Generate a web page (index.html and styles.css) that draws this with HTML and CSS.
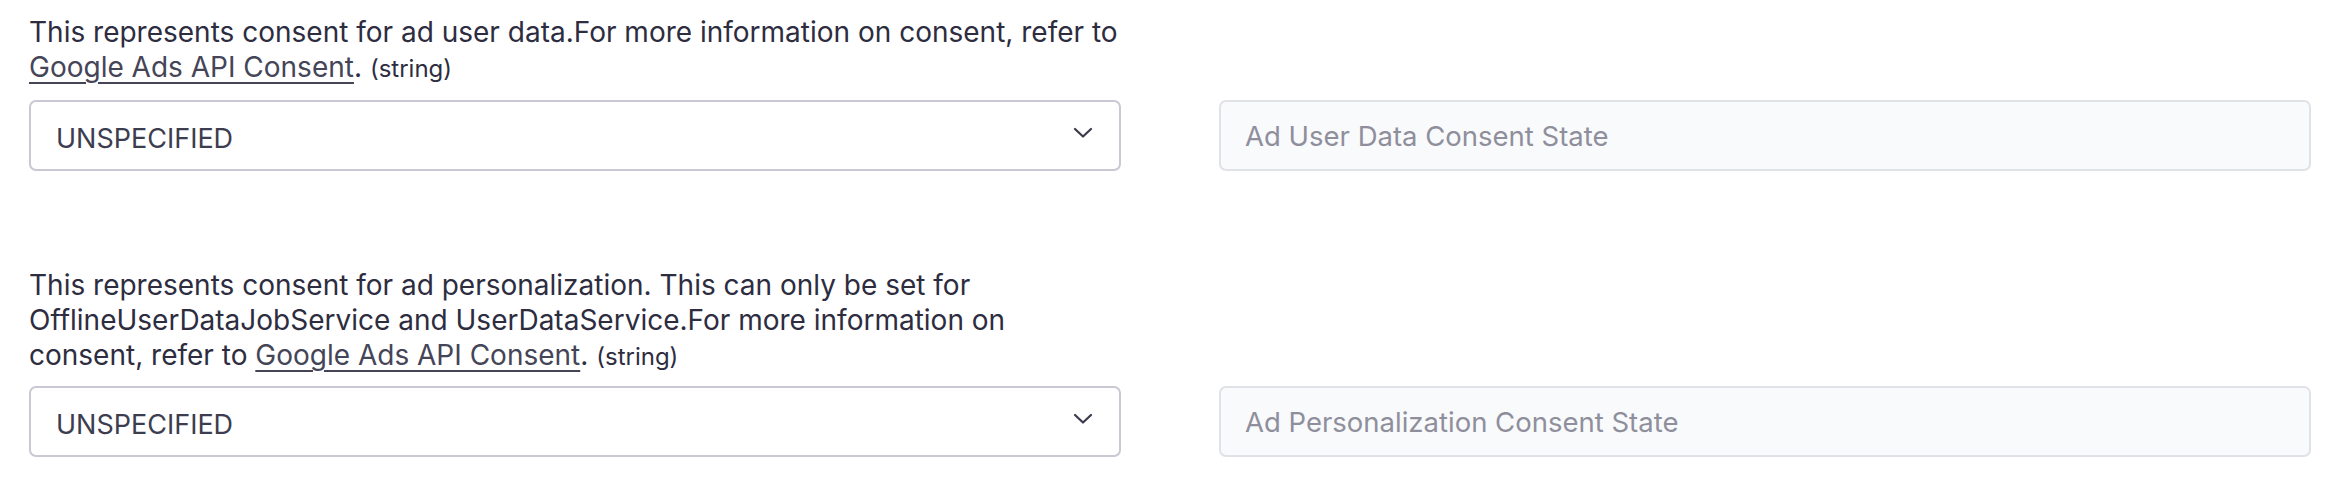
FILE: index.html
```html
<!DOCTYPE html>
<html>
<head>
<meta charset="utf-8">
<link rel="stylesheet" href="styles.css">
</head>
<body>
<div class="page">
  <div class="row">
    <div class="col">
      <p class="desc">This represents consent for ad user data.For more information on consent, refer to <a href="#">Google Ads API Consent</a>. <span class="type">(string)</span></p>
      <div class="select">
        <span>UNSPECIFIED</span>
        <svg class="chev" width="20" height="12" viewBox="0 0 20 12"><path d="M2 2 L10 9.5 L18 2" fill="none" stroke="#3a3a4c" stroke-width="2.2" stroke-linecap="round" stroke-linejoin="round"/></svg>
      </div>
    </div>
    <div class="col">
      <div class="input">Ad User Data Consent State</div>
    </div>
  </div>
  <div class="row">
    <div class="col">
      <p class="desc">This represents consent for ad personalization. This can only be set for OfflineUserDataJobService and UserDataService.For more information on consent, refer to <a href="#">Google Ads API Consent</a>. <span class="type">(string)</span></p>
      <div class="select">
        <span>UNSPECIFIED</span>
        <svg class="chev" width="20" height="12" viewBox="0 0 20 12"><path d="M2 2 L10 9.5 L18 2" fill="none" stroke="#3a3a4c" stroke-width="2.2" stroke-linecap="round" stroke-linejoin="round"/></svg>
      </div>
    </div>
    <div class="col">
      <div class="input">Ad Personalization Consent State</div>
    </div>
  </div>
</div>
</body>
</html>
```
FILE: styles.css
```css
html, body {
  margin: 0;
  padding: 0;
  background: #ffffff;
}
body {
  font-family: Inter, "Noto Sans", sans-serif;
  color: #2d2d3f;
}
.page {
  padding: 15px 29px 0 29px;
  display: flex;
  flex-direction: column;
  gap: 97px;
}
.row {
  display: grid;
  grid-template-columns: 1fr 1fr;
  column-gap: 98px;
  align-items: end;
}
.col {
  display: flex;
  flex-direction: column;
}
.desc {
  margin: 0 0 14px 0;
  font-size: 28px;
  line-height: 35px;
}
.row + .row .desc {
  margin-bottom: 12px;
}
.desc a {
  color: #454558;
  text-decoration: underline;
  text-underline-offset: 5px;
  text-decoration-thickness: 2px;
}
.type {
  font-size: 24px;
}
.select {
  box-sizing: border-box;
  height: 71px;
  border: 2px solid #c9c8d3;
  border-radius: 7px;
  background: #fff;
  display: flex;
  align-items: center;
  justify-content: space-between;
  padding: 0 26px 0 25px;
  font-size: 27px;
  color: #3d3d50;
}
.select span {
  margin-top: 6px;
}
.chev {
  margin-top: -6px;
}
.input {
  box-sizing: border-box;
  height: 71px;
  border: 2px solid #e1e1e8;
  border-radius: 7px;
  background: #f9fafc;
  display: flex;
  align-items: center;
  padding: 0 24px;
  font-size: 27.5px;
  color: #8f8f9c;
}
```
